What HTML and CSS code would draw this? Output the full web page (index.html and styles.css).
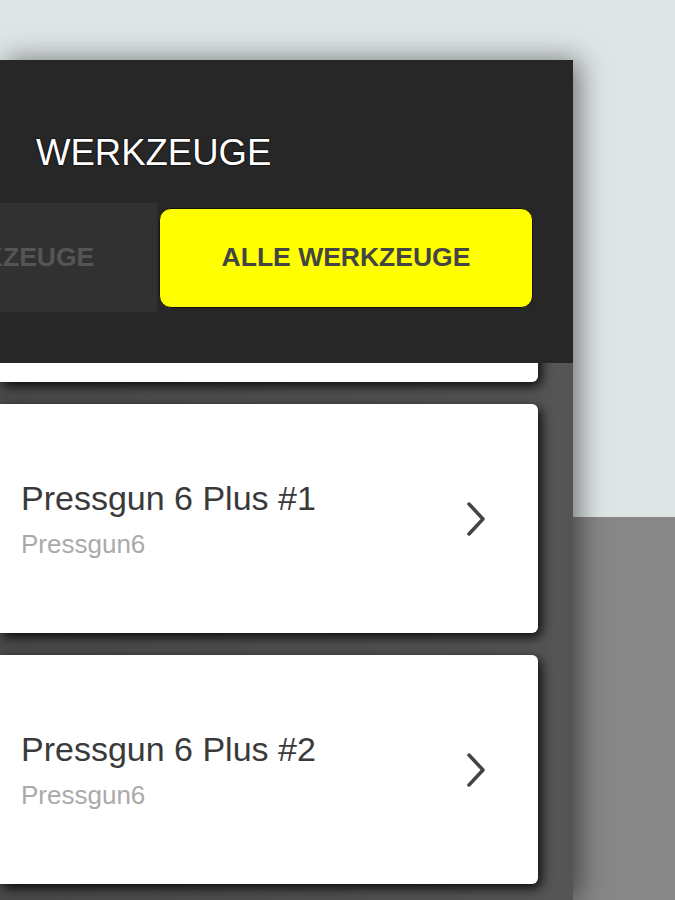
FILE: index.html
```html
<!DOCTYPE html>
<html lang="de">
<head>
  <meta charset="UTF-8">
  <meta name="viewport" content="width=device-width, initial-scale=1.0">
  <title>Werkzeuge</title>
  <link rel="stylesheet" href="styles.css">
</head>
<body>

  <div class="panel">
    <!-- Kopfbereich -->
    <div class="header">
      <h1>WERKZEUGE</h1>
      <div class="tabs">
        <div class="tab">MEINE WERKZEUGE</div>
        <div class="tab active">ALLE WERKZEUGE</div>
      </div>
    </div>

    <!-- Liste der Werkzeuge -->
    <div class="list">
      <div class="card first">
        <div class="card-text">
          <div class="card-title">Pressgun 6 Plus #0</div>
          <div class="card-sub">Pressgun6</div>
        </div>
      </div>

      <div class="card">
        <div class="card-text">
          <div class="card-title">Pressgun 6 Plus #1</div>
          <div class="card-sub">Pressgun6</div>
        </div>
        <svg class="chevron" width="20" height="34" viewBox="0 0 20 34">
          <polyline points="3,2 17,17 3,32" fill="none" stroke="#444" stroke-width="3.5" stroke-linecap="round" stroke-linejoin="round"/>
        </svg>
      </div>

      <div class="card">
        <div class="card-text">
          <div class="card-title">Pressgun 6 Plus #2</div>
          <div class="card-sub">Pressgun6</div>
        </div>
        <svg class="chevron" width="20" height="34" viewBox="0 0 20 34">
          <polyline points="3,2 17,17 3,32" fill="none" stroke="#444" stroke-width="3.5" stroke-linecap="round" stroke-linejoin="round"/>
        </svg>
      </div>
    </div>
  </div>

</body>
</html>
```

FILE: styles.css
```css
html, body {
  margin: 0;
  padding: 0;
  height: 900px;
  overflow: hidden;
}

body {
  font-family: "Liberation Sans", Arial, sans-serif;
  background: linear-gradient(to bottom, #dfe5e5 0, #dfe5e5 517px, #878787 517px, #878787 100%);
  padding-top: 60px;
  box-sizing: border-box;
}

.panel {
  width: 573px;
  height: 840px;
  display: flex;
  flex-direction: column;
  background-color: #545454;
  box-shadow: 6px 0 26px rgba(0, 0, 0, 0.5);
  overflow: hidden;
}

.header {
  background-color: #272727;
  padding: 73px 0 51px 0;
  position: relative;
  z-index: 2;
}

h1 {
  margin: 0 0 30px 36px;
  font-size: 36.5px;
  line-height: 40px;
  font-weight: normal;
  color: #fff;
  text-shadow: 0 0 2px #000, 0 0 1px #000;
}

.tabs {
  display: flex;
  align-items: center;
  margin-left: -232px;
  height: 109px;
}

.tab {
  width: 389px;
  height: 109px;
  display: flex;
  align-items: center;
  justify-content: center;
  background-color: #313131;
  color: #555;
  font-size: 26.5px;
  font-weight: bold;
  flex-shrink: 0;
  white-space: nowrap;
}

.tab.active {
  width: 372px;
  height: 98px;
  margin-left: 2px;
  background-color: #ffff00;
  color: #444;
  border: 1px solid #111;
  border-radius: 12px;
}

.list {
  flex: 1;
  display: flex;
  flex-direction: column;
  gap: 22px;
  padding-right: 35px;
  background: linear-gradient(to right, #4a4a4a, #555 100%);
}

.card {
  height: 229px;
  flex-shrink: 0;
  display: flex;
  align-items: center;
  justify-content: space-between;
  background-color: #fff;
  border-radius: 0 6px 6px 0;
  box-shadow: 3px 4px 12px rgba(0, 0, 0, 0.9);
  padding: 0 52px 0 21px;
}

.card.first {
  margin-top: -210px;
}

.card-text {
  display: flex;
  flex-direction: column;
  gap: 13px;
}

.card-title {
  font-size: 34px;
  line-height: 38px;
  color: #3a3a3a;
}

.card-sub {
  font-size: 26px;
  line-height: 29px;
  color: #aaa;
}

.chevron {
  display: block;
}
```
